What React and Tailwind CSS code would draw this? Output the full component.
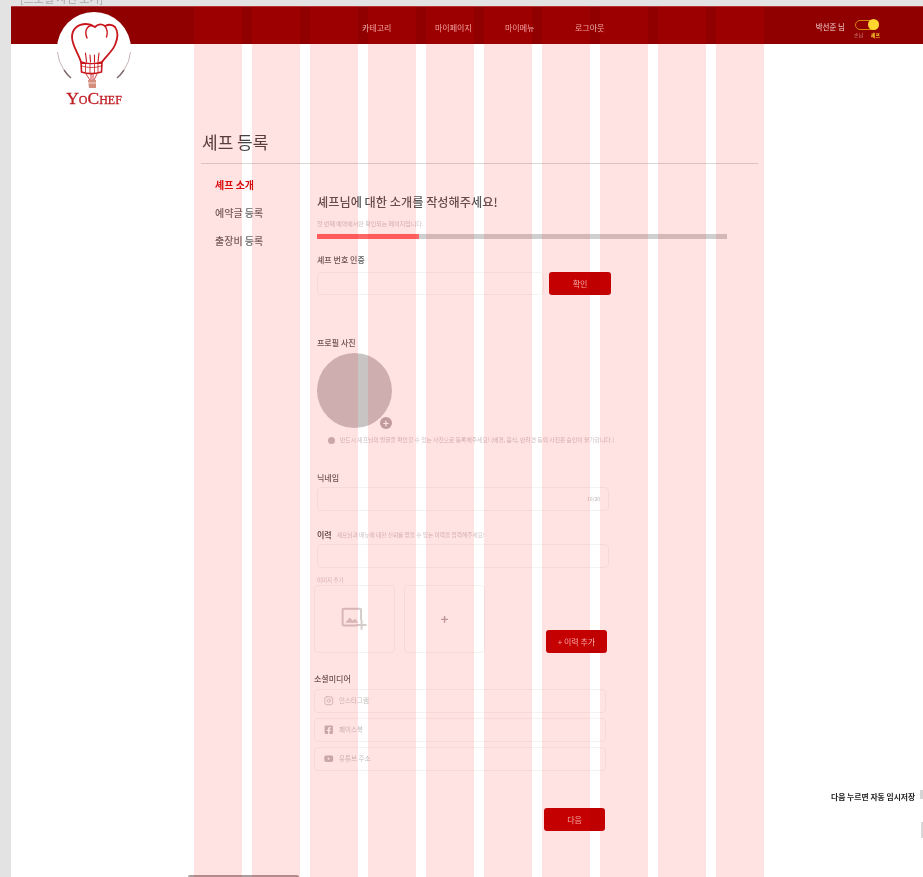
import React from "react";
import { FaFacebookSquare, FaYoutube } from "react-icons/fa";
import { FiInstagram } from "react-icons/fi";

const cols = [0, 1, 2, 3, 4, 5, 6, 7, 8, 9];

function Logo() {
  return (
    <div className="absolute left-[46px] top-[6px] w-[96px] h-[104px]">
      <svg width="96" height="84" viewBox="46 6 96 84" fill="none" className="block">
        <circle cx="94" cy="49" r="37" fill="#fff" />
        <path d="M57.500 52 A37 37 0 0 0 64 70" stroke="#c9b4b4" strokeWidth="1" />
        <path d="M64 70 A37 37 0 0 0 71 78" stroke="#7d6666" strokeWidth="1.400" />
        <path d="M130.500 52 A37 37 0 0 1 124 70" stroke="#c9b4b4" strokeWidth="1" />
        <path d="M124 70 A37 37 0 0 1 117 78" stroke="#7d6666" strokeWidth="1.400" />
        <g stroke="#c8161c" strokeLinecap="round" strokeLinejoin="round">
          <path strokeWidth="1.800" d="M81 62 C78 53 72 45 72 37 C72 29 78 24 86 24 C90 24 92 25 95 27 C98 24 102 24 105 26 C109 24 113 25 115 27 C118 31 118 38 115 45 C112 52 105 57 102 62" />
          <path strokeWidth="1.400" d="M87 38 C84 31 87 26 92 25.500" />
          <path strokeWidth="1.400" d="M105 26 C107 29 108 33 106.500 37" />
          <path strokeWidth="1.100" d="M85.500 53 L86.500 62 M90 55 L90.500 62 M94.500 55 L94.500 62 M99 53 L98 62" />
          <path strokeWidth="1.600" d="M81 62 C87 64 96 64 102 62 L101.500 72 C95 74 87 74 81.500 72 Z" />
          <path strokeWidth="0.800" d="M82 66 C87 68 96 68 101 66 M85.500 64 L85.500 72 M90 64 L90 73 M94.500 64 L94.500 73 M98 64 L98 72" />
          <path strokeWidth="0.800" d="M86 74 L90 80 M97 74 L94 80 M91 74 L91 80 M93 74 L93 80" />
        </g>
        <path d="M88 80 H96 V88 H89 Z" fill="#d58d7d" />
        <path d="M88 83 H96" stroke="#fff" strokeWidth="0.700" />
      </svg>
      <div className="mt-[-1px] h-[18px] text-center text-[#bf1c22] text-[17.500px] leading-[18px] font-['Liberation_Serif',serif] [-webkit-text-stroke:0.3px_#bf1c22] [font-variant:small-caps]">
        YoChef
      </div>
    </div>
  );
}

function Nav() {
  return (
    <header className="h-[38px] bg-[#900000] border-t border-[#b23a3a] flex items-center shrink-0">
      <nav className="flex ml-[351px] mt-[4px] text-[8px] leading-[12px] text-[#f2b6b6]">
        <span className="w-[73px]">카테고리</span>
        <span className="w-[70px]">마이페이지</span>
        <span className="w-[70px]">마이메뉴</span>
        <span>로그아웃</span>
      </nav>
      <div className="ml-auto mr-[43px] flex items-center">
        <span className="text-[7.500px] leading-[12px] text-[#f5d0d0] mr-[9px] mb-[-2px]">박선준 님</span>
        <div className="w-[26px] h-[24px] flex flex-col items-center">
          <div className="w-[24px] h-[10px] mr-[1px] rounded-full border border-[#d08a00] flex justify-end items-center mt-[6px]">
            <span className="w-[11px] h-[11px] mr-[-1px] rounded-full bg-[#ffd530]" />
          </div>
          <div className="flex w-full justify-between text-[5px] leading-[7px] mt-[1px]">
            <span className="text-[#d88f8f]">손님</span>
            <span className="text-[#ffd530] font-bold">셰프</span>
          </div>
        </div>
      </div>
    </header>
  );
}

function Box({ className = "", children }) {
  return (
    <div className={"border border-[#f7f2f2] rounded-[4px] flex items-center " + className}>{children}</div>
  );
}

function Label({ children, className = "" }) {
  return <div className={"h-[12px] text-[8px] leading-[12px] font-medium text-[#5c5c5c] " + className}>{children}</div>;
}

function Red({ children, className = "" }) {
  return (
    <button className={"w-[61px] h-[23px] rounded-[3px] bg-[#be0000] text-[#f3b8b8] text-[8px] flex items-center justify-center " + className}>
      {children}
    </button>
  );
}

function Social({ icon, text }) {
  return (
    <Box className="w-[292px] h-[24px] pl-[9px] text-[#c4bcbc]">
      <span className="w-[15px] flex justify-start text-[9.500px]">{icon}</span>
      <span className="text-[6.500px] text-[#c8c0c0]">{text}</span>
    </Box>
  );
}

export default function App() {
  return (
    <div className="relative w-[923px] h-[877px] overflow-hidden bg-[#e3e3e3] font-['Noto_Sans_CJK_KR','Noto_Sans',sans-serif] blur-[0.6px]">
      <div className="h-[6px] overflow-hidden pl-[20px]">
        <div className="mt-[-9px] text-[11px] leading-[14px] text-[#a8a8a8]">[프로필 사진 보기]</div>
      </div>
      <div className="ml-[11px] h-[871px] bg-white flex flex-col">
        <Nav />
        <main className="pl-[190px] w-[747px]">
          <h1 className="mt-[86px] h-[24px] pl-[1px] text-[17px] leading-[24px] font-normal text-[#444]">셰프 등록</h1>
          <div className="mt-[9px] border-b border-[#ddd6d6]" />
          <div className="flex">
            <aside className="w-[116px] pl-[14px] pt-[14px] flex flex-col gap-[14px] text-[10px] leading-[14px] font-medium text-[#666]">
              <span className="font-bold text-[#d40d0d]">셰프 소개</span>
              <span>예약글 등록</span>
              <span>출장비 등록</span>
            </aside>
            <section className="flex-1">
              <h2 className="mt-[30px] h-[16px] text-[12.200px] leading-[16px] font-medium text-[#555]">셰프님에 대한 소개를 작성해주세요!</h2>
              <p className="mt-[10px] h-[8px] text-[6px] leading-[8px] text-[#d0c0c0]">첫 번째 예약에서만 확인되는 페이지입니다.</p>
              <div className="mt-[6px] w-[410px] h-[5px] bg-[#cfcfcf]">
                <div className="w-[102px] h-full bg-[#ff6666]" />
              </div>
              <Label className="mt-[15px]">셰프 번호 인증</Label>
              <div className="mt-[6px] flex gap-[5px]">
                <Box className="w-[227px] h-[23px]" />
                <Red className="w-[62px]">확인</Red>
              </div>
              <Label className="mt-[42px]">프로필 사진</Label>
              <div className="relative mt-[4px] w-[75px] h-[75px] rounded-full bg-[#c8c4c4]">
                <span className="absolute left-[63px] top-[64px] w-[12px] h-[12px] rounded-full bg-[#b8aeae] text-white text-[10px] leading-[11px] text-center font-bold">+</span>
              </div>
              <div className="mt-[7px] h-[10px] pl-[11px] flex items-center gap-[5px]">
                <span className="w-[7px] h-[7px] rounded-full bg-[#c4baba]" />
                <span className="text-[5.800px] leading-[10px] text-[#d0c0c0] whitespace-nowrap">반드시 셰프님의 얼굴을 확인할 수 있는 사진으로 등록해주세요! (배경, 음식, 반려견 등의 사진은 승인이 불가합니다.)</span>
              </div>
              <Label className="mt-[27px]">닉네임</Label>
              <Box className="mt-[3px] w-[292px] h-[24px] justify-end pr-[8px]">
                <span className="text-[5px] text-[#c0b4b4]">10/20</span>
              </Box>
              <div className="mt-[18px] h-[12px] flex items-center gap-[5px]">
                <span className="text-[8px] leading-[12px] font-bold text-[#5c5c5c]">이력</span>
                <span className="text-[5.700px] leading-[12px] text-[#d0c0c0]">셰프님과 메뉴에 대한 신뢰를 얻을 수 있는 이력을 입력해주세요!</span>
              </div>
              <Box className="mt-[3px] w-[292px] h-[24px]" />
              <p className="mt-[8px] h-[8px] text-[5.500px] leading-[8px] text-[#d0c0c0]">이미지 추가</p>
              <div className="mt-[1px] ml-[-3px] flex h-[68px]">
                <Box className="w-[81px] h-full justify-center pr-[2px] text-[#d4caca]">
                  <svg width="26" height="24" viewBox="0 0 24 22" fill="none" stroke="currentColor" strokeWidth="1.800">
                    <path d="M15 17H2.500a1 1 0 0 1-1-1V2.500a1 1 0 0 1 1-1h15a1 1 0 0 1 1 1V12" />
                    <path d="M4 14.500l4-5 3 3 2-2 3 4z" fill="currentColor" stroke="none" />
                    <path d="M19 12v9M14.500 16.500h9" />
                  </svg>
                </Box>
                <Box className="ml-[9px] w-[81px] h-full justify-center">
                  <span className="text-[13px] font-bold text-[#b8aaaa]">+</span>
                </Box>
                <Red className="ml-[61px] self-end">+ 이력 추가</Red>
              </div>
              <div className="ml-[-3px]">
                <Label className="mt-[20px]">소셜미디어</Label>
                <div className="mt-[4px] flex flex-col gap-[5px]">
                  <Social icon={<FiInstagram />} text="인스타그램" />
                  <Social icon={<FaFacebookSquare />} text="페이스북" />
                  <Social icon={<FaYoutube />} text="유튜브 주소" />
                </div>
                <Red className="mt-[37px] ml-[230px]">다음</Red>
              </div>
            </section>
          </div>
        </main>
      </div>

      <Logo />

      <div className="absolute left-[831px] top-[791px] text-[7.800px] leading-[12px] font-bold text-[#222] whitespace-nowrap">다음 누르면 자동 임시저장</div>
      <div className="absolute left-[920px] top-[790px] w-[3px] h-[9px] bg-[#d4d4d4]" />
      <div className="absolute left-[921px] top-[822px] w-[2px] h-[16px] bg-[#d8d8d8]" />
      <div className="absolute left-[188px] top-[875px] w-[111px] h-[2px] rounded-t-[5px] bg-[#a89c9c]" />

      <div className="absolute inset-0 pointer-events-none pl-[194px] flex gap-[10px]">
        {cols.map((c) => (
          <div key={c} className="w-[48px] mt-[6px] bg-[#ff0000]/11" />
        ))}
      </div>
    </div>
  );
}
